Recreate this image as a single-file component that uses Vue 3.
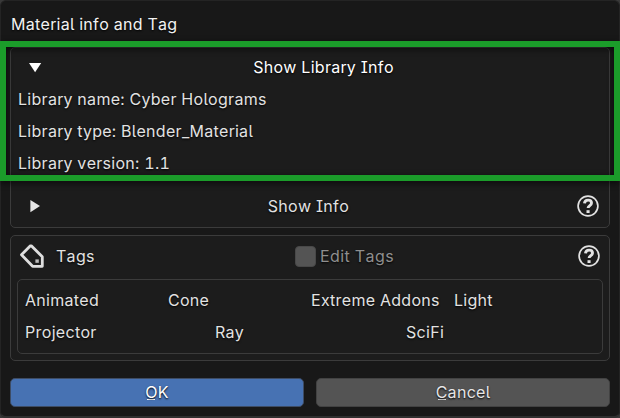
<script setup>
const info = [
  { label: 'Library name:', value: 'Cyber Holograms' },
  { label: 'Library type:', value: 'Blender_Material' },
  { label: 'Library version:', value: '1.1' },
]
const firstTags = ['Animated', 'Cone', 'Extreme Addons', 'Light']
const secondTags = ['Projector', 'Ray', 'SciFi']
</script>

<template>
  <main class="dialog">
    <h1 class="title">Material info and Tag</h1>

    <section class="panel library">
      <div class="row header open">
        <svg class="arrow" viewBox="0 0 14 14"><path d="M1 3h12.2L7.1 12.2z" fill="#fff" /></svg>
        <span>Show Library Info</span>
      </div>
      <p v-for="item in info" :key="item.label" class="row">{{ item.label }} {{ item.value }}</p>
      <div class="row header closed">
        <svg class="arrow" viewBox="0 0 14 14"><path d="M2.4 0.9v12.3L12 7z" fill="#e6e6e6" /></svg>
        <span>Show Info</span>
        <svg class="help" viewBox="0 0 22 22">
          <circle cx="11" cy="11" r="9.9" />
          <path d="M7.5 8.4C7.6 6.1 9 5.1 11.1 5.1c2 0 3.4 1.1 3.4 2.9 0 2.6-3.4 2.5-3.4 5.1" />
          <rect x="9.5" y="15.2" width="3.1" height="2.8" />
        </svg>
      </div>
    </section>

    <section class="panel tags">
      <div class="tags-header">
        <svg class="tag-icon" viewBox="0 0 26 26">
          <path d="M11.4 2.8 2.5 11.8 13.6 23.3H23.3V13.8L12.3 2.8z" />
          <rect x="16.4" y="16.4" width="3.4" height="3.4" />
        </svg>
        <span class="tags-title">Tags</span>
        <label class="edit"><span class="checkbox"></span>Edit Tags</label>
        <svg class="help" viewBox="0 0 22 22">
          <circle cx="11" cy="11" r="9.9" />
          <path d="M7.5 8.4C7.6 6.1 9 5.1 11.1 5.1c2 0 3.4 1.1 3.4 2.9 0 2.6-3.4 2.5-3.4 5.1" />
          <rect x="9.5" y="15.2" width="3.1" height="2.8" />
        </svg>
      </div>
      <div class="tag-list">
        <div class="tag-row four"><span v-for="tag in firstTags" :key="tag">{{ tag }}</span></div>
        <div class="tag-row three"><span v-for="tag in secondTags" :key="tag">{{ tag }}</span></div>
      </div>
    </section>

    <footer class="actions">
      <button class="ok"><span class="key">O</span>K</button>
      <button><span class="key">C</span>ancel</button>
    </footer>

    <div class="highlight"></div>
  </main>
</template>

<style>
body { background: #393939; }
</style>

<style scoped>
* { box-sizing: border-box; }
.dialog {
  position: relative;
  width: 620px;
  height: 418px;
  padding: 5px 9px 0;
  border: 1px solid #242424;
  border-bottom: 2px solid #303030;
  border-radius: 6px;
  background: #181818;
  color: #e2e2e2;
  font: 400 16px/32px Inter, "Liberation Sans", sans-serif;
  font-feature-settings: "cv05", "cv08", "tnum", "calt" 0;
  font-kerning: none;
  letter-spacing: 0.29px;
  text-shadow: 0 1px 2px #000;
  white-space: nowrap;
}
.title {
  height: 36px;
  margin: 0 0 5px;
  padding-left: 1px;
  font-size: 16px;
  font-weight: 400;
  line-height: 36px;
  color: #f2f2f2;
}
.panel {
  border: 1px solid #3b3b3b;
  border-radius: 5px;
  background: #1c1c1c;
}
.library { height: 181px; padding: 3px 7px 0; }
.row { height: 32px; margin: 0; }
.header {
  display: grid;
  align-items: center;
  text-align: center;
}
.open { grid-template-columns: 34px 1fr 7px; color: #fff; }
.closed { grid-template-columns: 34px 1fr 37px; margin-top: 11px; }
.arrow { width: 14px; height: 14px; margin-left: 10px; }
.help {
  display: block;
  width: 22px;
  height: 22px;
  justify-self: end;
  fill: none;
  stroke: #e2e2e2;
  stroke-width: 1.7;
}
.help path { stroke-width: 2.9; }
.help rect { fill: #e2e2e2; stroke: none; }
.closed .help { margin-right: 3px; }
.tags { height: 126px; margin-top: 7px; padding: 4px 6px 0; }
.tags-header {
  display: grid;
  grid-template-columns: 39px 239px 1fr 22px;
  align-items: center;
  height: 32px;
  padding-right: 3px;
}
.tag-icon {
  width: 26px;
  height: 26px;
  margin-left: 2px;
  fill: none;
  stroke: #dedede;
  stroke-width: 2.8;
  stroke-linejoin: round;
}
.tag-icon rect { fill: #bcbcbc; stroke: none; }
.edit {
  display: flex;
  align-items: center;
  gap: 4px;
  color: #8f8f8f;
  letter-spacing: 0.4px;
}
.checkbox {
  width: 21px;
  height: 21px;
  border: 1px solid #484848;
  border-radius: 4px;
  background: #545454;
}
.tag-list {
  height: 75px;
  margin-top: 7px;
  padding: 4px 7px;
  border: 1px solid #3b3b3b;
  border-radius: 5px;
}
.tag-row { display: grid; height: 32px; }
.four { grid-template-columns: 143px 143px 143px 1fr; }
.three { grid-template-columns: 190px 191px 1fr; }
.actions {
  display: grid;
  grid-template-columns: 294px 294px;
  gap: 12px;
  margin-top: 17px;
}
button {
  height: 29px;
  padding: 0;
  border: 1px solid #424242;
  border-radius: 5px;
  background: #545454;
  color: #e6e6e6;
  font: inherit;
  line-height: 27px;
  letter-spacing: inherit;
  text-shadow: inherit;
  font-feature-settings: inherit;
}
.ok { background: #4772b3; color: #fff; border-color: #3d4c65; }
.key { background: linear-gradient(currentColor, currentColor) 2px calc(100% - 2px) / 8px 1px no-repeat; }
.highlight {
  position: absolute;
  top: 40px;
  left: -1px;
  width: 620px;
  height: 140px;
  border: 6px solid #1b9c2a;
  filter: drop-shadow(0 2px 3px rgba(0, 0, 0, 0.65));
  pointer-events: none;
}
</style>
